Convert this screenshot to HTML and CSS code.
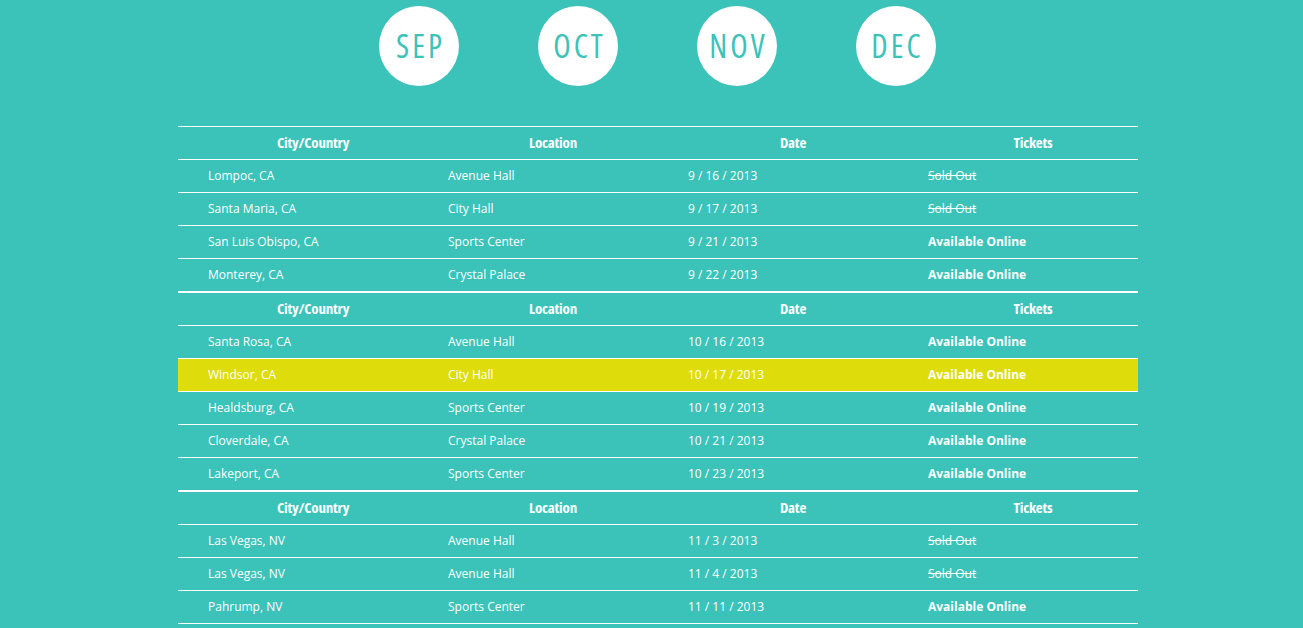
FILE: index.html
```html
<!DOCTYPE html>
<html lang="en">
<head>
<meta charset="utf-8">
<title>Tour Dates</title>
<link rel="stylesheet" href="styles.css">
</head>
<body>
<main class="page">
  <nav class="months">
    <a class="month month-sep">SEP</a>
    <a class="month month-oct">OCT</a>
    <a class="month month-nov">NOV</a>
    <a class="month month-dec">DEC</a>
  </nav>
  <table class="dates">
    <thead><tr><th>City/Country</th><th>Location</th><th>Date</th><th>Tickets</th></tr></thead>
    <tbody>
      <tr><td>Lompoc, CA</td><td>Avenue Hall</td><td>9 / 16 / 2013</td><td class="sold">Sold Out</td></tr>
      <tr><td>Santa Maria, CA</td><td>City Hall</td><td>9 / 17 / 2013</td><td class="sold">Sold Out</td></tr>
      <tr><td>San Luis Obispo, CA</td><td>Sports Center</td><td>9 / 21 / 2013</td><td class="open">Available Online</td></tr>
      <tr><td>Monterey, CA</td><td>Crystal Palace</td><td>9 / 22 / 2013</td><td class="open">Available Online</td></tr>
    </tbody>
  </table>
  <table class="dates">
    <thead><tr><th>City/Country</th><th>Location</th><th>Date</th><th>Tickets</th></tr></thead>
    <tbody>
      <tr><td>Santa Rosa, CA</td><td>Avenue Hall</td><td>10 / 16 / 2013</td><td class="open">Available Online</td></tr>
      <tr class="highlight"><td>Windsor, CA</td><td>City Hall</td><td>10 / 17 / 2013</td><td class="open">Available Online</td></tr>
      <tr><td>Healdsburg, CA</td><td>Sports Center</td><td>10 / 19 / 2013</td><td class="open">Available Online</td></tr>
      <tr><td>Cloverdale, CA</td><td>Crystal Palace</td><td>10 / 21 / 2013</td><td class="open">Available Online</td></tr>
      <tr><td>Lakeport, CA</td><td>Sports Center</td><td>10 / 23 / 2013</td><td class="open">Available Online</td></tr>
    </tbody>
  </table>
  <table class="dates">
    <thead><tr><th>City/Country</th><th>Location</th><th>Date</th><th>Tickets</th></tr></thead>
    <tbody>
      <tr><td>Las Vegas, NV</td><td>Avenue Hall</td><td>11 / 3 / 2013</td><td class="sold">Sold Out</td></tr>
      <tr><td>Las Vegas, NV</td><td>Avenue Hall</td><td>11 / 4 / 2013</td><td class="sold">Sold Out</td></tr>
      <tr><td>Pahrump, NV</td><td>Sports Center</td><td>11 / 11 / 2013</td><td class="open">Available Online</td></tr>
    </tbody>
  </table>
</main>
</body>
</html>
```
FILE: styles.css
```css
html, body {
  margin: 0;
  height: 100%;
  overflow: hidden;
}
body {
  background: #3bc3ba;
  color: #fff;
  font-family: "Open Sans", "Liberation Sans", sans-serif;
  font-size: 12px;
}
.page {
  width: 960px;
  margin-left: 178px;
}
.months {
  display: flex;
  gap: 79px;
  padding: 6px 0 40px 201px;
}
.month {
  box-sizing: border-box;
  width: 80px;
  height: 80px;
  padding: 0 0 2px 3px;
  border-radius: 50%;
  background: #fff;
  color: #3bc3ba;
  display: flex;
  align-items: center;
  justify-content: center;
  font-family: "Open Sans", "DejaVu Sans Condensed", sans-serif;
  font-stretch: 75%;
  font-size: 32px;
  font-weight: 400;
  letter-spacing: 3px;
}
.dates {
  width: 960px;
  border-collapse: separate;
  border-spacing: 0;
  table-layout: fixed;
  border-top: 1px solid #fff;
}
.dates th,
.dates td {
  height: 30px;
  padding: 0 0 2px 30px;
  border-bottom: 1px solid #fff;
}
.dates th {
  text-align: center;
  font-family: "Open Sans", "DejaVu Sans Condensed", sans-serif;
  font-stretch: 75%;
  font-size: 15px;
  font-weight: 700;
  letter-spacing: -0.2px;
}
.dates td {
  text-align: left;
  font-weight: 400;
}
.dates .open {
  font-weight: 700;
}
.dates .sold {
  font-weight: 500;
  text-decoration: line-through;
}
.highlight td {
  background: #dedc0b;
}
```
